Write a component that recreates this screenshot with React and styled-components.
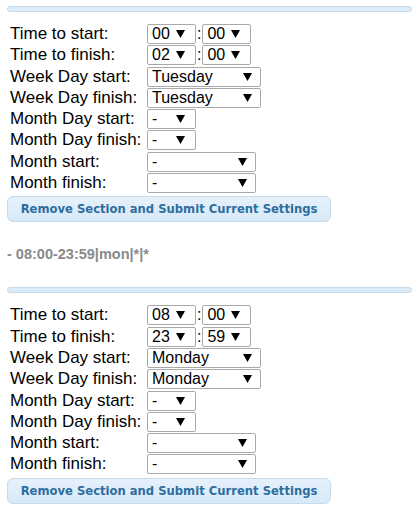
import React from "react";
import styled, { createGlobalStyle } from "styled-components";

const GlobalStyle = createGlobalStyle`
  html, body { margin: 0; padding: 0; background: #fff; }
  body { font-family: "Liberation Sans", Arial, sans-serif; color: #000; }
`;

const Page = styled.div`
  padding: 6px 8px 0 7px;
`;

const Section = styled.section`
  display: flex;
  flex-direction: column;
`;

const Bar = styled.div`
  height: 4px;
  background: #dcebf8;
  border: 1px solid #c5dbec;
  border-radius: 4px;
`;

const Form = styled.div`
  display: grid;
  grid-template-columns: 137px auto;
  grid-auto-rows: 21.3px;
  align-items: start;
  margin: 12px 0 0 3px;
`;

const Label = styled.div`
  font-size: 17px;
  line-height: 20px;
  white-space: nowrap;
`;

const Field = styled.div`
  display: flex;
  align-items: center;
`;

const SelectBox = styled.div`
  width: ${(p) => p.$w}px;
  height: 20px;
  box-sizing: border-box;
  border: 1px solid #a9a9a9;
  border-radius: 2px;
  background: #fff;
  display: flex;
  align-items: center;
  justify-content: space-between;
  padding: 0 ${(p) => (p.$w > 60 ? 8 : 10)}px 0 4px;
  font-size: 16px;
  line-height: 18px;
`;

const Colon = styled.span`
  font-size: 16px;
  line-height: 20px;
  margin: 0 1px;
`;

const Arrow = () => (
  <svg width="9" height="8" viewBox="0 0 9 8">
    <polygon points="0,0 9,0 4.5,8" fill="#000" />
  </svg>
);

const Select = ({ w, value }) => (
  <SelectBox $w={w}>
    <span>{value}</span>
    <Arrow />
  </SelectBox>
);

const Button = styled.button`
  margin-top: 2px;
  width: 324px;
  height: 26px;
  box-sizing: border-box;
  border: 1px solid #c5dbec;
  border-radius: 6px;
  background: linear-gradient(#e6f1fb, #d7e9f8);
  color: #2e6e9e;
  font-family: "DejaVu Sans", "Lucida Grande", sans-serif;
  font-weight: bold;
  font-size: 11.6px;
  padding: 0;
  text-align: center;
  cursor: pointer;
`;

const Summary = styled.div`
  margin: 24px 0 25px;
  font-size: 14.5px;
  line-height: 16px;
  font-weight: bold;
  color: #8a8a8a;
`;

const sections = [
  { h1: "00", m1: "00", h2: "02", m2: "00", wd: "Tuesday" },
  { h1: "08", m1: "00", h2: "23", m2: "59", wd: "Monday" },
];

const ConfigSection = ({ s }) => (
  <Section>
    <Bar />
    <Form>
      <Label>Time to start:</Label>
      <Field>
        <Select w={49} value={s.h1} />
        <Colon>:</Colon>
        <Select w={49} value={s.m1} />
      </Field>
      <Label>Time to finish:</Label>
      <Field>
        <Select w={49} value={s.h2} />
        <Colon>:</Colon>
        <Select w={49} value={s.m2} />
      </Field>
      <Label>Week Day start:</Label>
      <Field>
        <Select w={114} value={s.wd} />
      </Field>
      <Label>Week Day finish:</Label>
      <Field>
        <Select w={114} value={s.wd} />
      </Field>
      <Label>Month Day start:</Label>
      <Field>
        <Select w={49} value="-" />
      </Field>
      <Label>Month Day finish:</Label>
      <Field>
        <Select w={49} value="-" />
      </Field>
      <Label>Month start:</Label>
      <Field>
        <Select w={109} value="-" />
      </Field>
      <Label>Month finish:</Label>
      <Field>
        <Select w={109} value="-" />
      </Field>
    </Form>
    <Button>Remove Section and Submit Current Settings</Button>
  </Section>
);

export default function App() {
  return (
    <Page>
      <GlobalStyle />
      <ConfigSection s={sections[0]} />
      <Summary>- 08:00-23:59|mon|*|*</Summary>
      <ConfigSection s={sections[1]} />
    </Page>
  );
}
